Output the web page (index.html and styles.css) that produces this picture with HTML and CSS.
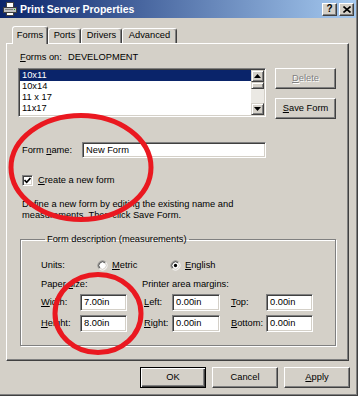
FILE: index.html
```html
<!DOCTYPE html>
<html>
<head>
<meta charset="utf-8">
<title>Print Server Properties</title>
<link rel="stylesheet" href="styles.css">
</head>
<body>
<div class="win">
  <div class="titlebar">
    <svg class="appicon" viewBox="0 0 16 16" width="16" height="16">
      <rect x="4.5" y="1.5" width="7" height="5" fill="#fff" stroke="#404040"/>
      <rect x="1.5" y="6.5" width="13" height="5" fill="#c0c0c0" stroke="#404040"/>
      <rect x="3" y="8" width="8" height="1" fill="#808080"/>
      <rect x="12" y="8" width="1" height="1" fill="#00c000"/>
      <rect x="4.5" y="11.5" width="7" height="3" fill="#fff" stroke="#404040"/>
    </svg>
    <span class="title">Print Server Properties</span>
    <span class="tbtn help">?</span>
    <span class="tbtn close"><svg viewBox="0 0 8 7" width="8" height="7"><path d="M0.5 0.5L7.5 6.5M7.5 0.5L0.5 6.5" stroke="#000" stroke-width="1.6"/></svg></span>
  </div>

  <div class="tabs">
    <div class="tab sel t-forms">Forms</div>
    <div class="tab t-ports">Ports</div>
    <div class="tab t-drivers">Drivers</div>
    <div class="tab t-adv">Advanced</div>
  </div>

  <div class="panel">
    <div class="formson"><span class="lbl-on"><u>F</u>orms on:</span><span>DEVELOPMENT</span></div>

    <div class="listrow">
      <div class="listbox">
        <div class="items">
          <div class="item sel">10x11</div>
          <div class="item">10x14</div>
          <div class="item">11 x 17</div>
          <div class="item">11x17</div>
        </div>
        <div class="vscroll">
          <div class="sbtn"><svg viewBox="0 0 7 4" width="7" height="4"><path d="M3.5 0L7 4H0z" fill="#000"/></svg></div>
          <div class="thumb"></div>
          <div class="track"></div>
          <div class="sbtn"><svg viewBox="0 0 7 4" width="7" height="4"><path d="M0 0H7L3.5 4z" fill="#000"/></svg></div>
        </div>
      </div>
      <div class="sidebtns">
        <div class="btn side disabled"><span><u>D</u>elete</span></div>
        <div class="btn side"><span><u>S</u>ave Form</span></div>
      </div>
    </div>

    <div class="namerow">
      <span class="lbl-name">Form <u>n</u>ame:</span>
      <div class="field wide">New Form</div>
    </div>

    <div class="checkrow">
      <span class="check"><svg viewBox="0 0 7 7" width="7" height="7"><path d="M0.5 3L2.7 5.3L6.5 1" stroke="#000" stroke-width="1.7" fill="none"/></svg></span>
      <span><u>C</u>reate a new form</span>
    </div>

    <p class="desc">Define a new form by editing the existing name and<br>measurements. Then click Save Form.</p>

    <fieldset class="group">
      <legend>Form description (measurements)</legend>
      <div class="units">
        <span class="lbl-units">Units:</span>
        <span class="opt metric">
          <svg class="radio" viewBox="0 0 12 12" width="11" height="11">
            <circle cx="6" cy="6" r="4" fill="#fff"/>
            <path d="M2.464 9.536A5 5 0 0 1 9.536 2.464" stroke="#808080" fill="none"/>
            <path d="M9.536 2.464A5 5 0 0 1 2.464 9.536" stroke="#fff" fill="none"/>
            <path d="M3.172 8.828A4 4 0 0 1 8.828 3.172" stroke="#404040" fill="none"/>
            <path d="M8.828 3.172A4 4 0 0 1 3.172 8.828" stroke="#d4d0c8" fill="none"/>
          </svg>
          <span><u>M</u>etric</span>
        </span>
        <span class="opt">
          <svg class="radio" viewBox="0 0 12 12" width="11" height="11">
            <circle cx="6" cy="6" r="4" fill="#fff"/>
            <path d="M2.464 9.536A5 5 0 0 1 9.536 2.464" stroke="#808080" fill="none"/>
            <path d="M9.536 2.464A5 5 0 0 1 2.464 9.536" stroke="#fff" fill="none"/>
            <path d="M3.172 8.828A4 4 0 0 1 8.828 3.172" stroke="#404040" fill="none"/>
            <path d="M8.828 3.172A4 4 0 0 1 3.172 8.828" stroke="#d4d0c8" fill="none"/>
            <circle cx="6" cy="6" r="1.8" fill="#000"/>
          </svg>
          <span><u>E</u>nglish</span>
        </span>
      </div>

      <div class="meas">
        <span class="c-paper">Paper <u>s</u>ize:</span>
        <span class="c-margins">Printer area margins:</span>

        <span class="c1"><u>W</u>idth:</span>
        <div class="field small c2">7.00in</div>
        <span class="c4"><u>L</u>eft:</span>
        <div class="field small c5">0.00in</div>
        <span class="c7"><u>T</u>op:</span>
        <div class="field small c8">0.00in</div>

        <span class="c1"><u>H</u>eight:</span>
        <div class="field small c2">8.00in</div>
        <span class="c4"><u>R</u>ight:</span>
        <div class="field small c5">0.00in</div>
        <span class="c7"><u>B</u>ottom:</span>
        <div class="field small c8">0.00in</div>
      </div>
    </fieldset>
  </div>

  <div class="buttons">
    <div class="btn dlg default"><span>OK</span></div>
    <div class="btn dlg"><span>Cancel</span></div>
    <div class="btn dlg"><span><u>A</u>pply</span></div>
  </div>

  <svg class="marks" viewBox="0 0 358 396" width="358" height="396">
    <ellipse cx="81" cy="167.5" rx="70" ry="52" fill="none" stroke="#ea1820" stroke-width="5"/>
    <ellipse cx="98" cy="313.5" rx="43" ry="39" fill="none" stroke="#ea1820" stroke-width="5"/>
  </svg>
</div>
</body>
</html>
```

FILE: styles.css
```css
* { box-sizing: border-box; }
html, body { margin: 0; padding: 0; }
body {
  width: 358px;
  height: 396px;
  overflow: hidden;
  background: #d4d0c8;
  font-family: "Liberation Sans", Arial, sans-serif;
  font-size: 9.3px;
  line-height: 11px;
  color: #000;
}
u { text-underline-offset: 1px; }

.win {
  position: relative;
  width: 358px;
  height: 396px;
  background: #d4d0c8;
  box-shadow: inset -1px -1px 0 #404040, inset -2px -2px 0 #808080;
  overflow: hidden;
}

/* title bar */
.titlebar {
  display: flex;
  align-items: center;
  width: 356px;
  height: 18px;
  padding: 0 2px 0 2px;
  background: linear-gradient(to right, #0a246a, #a6caf0);
}
.appicon { flex: none; }
.title {
  flex: 1;
  margin-left: 2px;
  color: #fff;
  font-weight: bold;
  font-size: 10.5px;
  white-space: nowrap;
}
.tbtn {
  flex: none;
  width: 15px;
  height: 13px;
  margin-left: 2px;
  display: flex;
  align-items: center;
  justify-content: center;
  background: #d4d0c8;
  border: 1px solid;
  border-color: #fff #404040 #404040 #fff;
  box-shadow: inset -1px -1px 0 #808080;
  font-weight: bold;
  font-size: 10px;
  line-height: 10px;
}

/* tabs */
.tabs {
  position: relative;
  z-index: 1;
  display: flex;
  align-items: flex-end;
  height: 17px;
  margin-top: 8px;
  padding-left: 12px;
}
.tab {
  height: 15px;
  padding-top: 1px;
  text-align: center;
  background: #d4d0c8;
  border: 1px solid;
  border-bottom: none;
  border-color: #fff #404040 transparent #fff;
  border-radius: 3px 3px 0 0;
  box-shadow: inset -1px 0 0 #808080;
  white-space: nowrap;
}
.tab.sel {
  height: 18px;
  margin-bottom: -1px;
  padding-top: 3px;
}
.t-forms { width: 36px; }
.t-ports { width: 33px; }
.t-drivers { width: 41px; }
.t-adv { width: 55px; }

/* panel */
.panel {
  margin-left: 6px;
  width: 343px;
  height: 318px;
  padding-top: 8px;
  border: 1px solid;
  border-color: #fff #404040 #404040 #fff;
  box-shadow: inset -1px -1px 0 #808080;
}
.formson {
  display: flex;
  height: 11px;
  margin-left: 13px;
}
.lbl-on { width: 48px; }

.listrow {
  display: flex;
  margin-top: 5px;
  margin-left: 11px;
}
.listbox {
  display: flex;
  width: 248px;
  height: 49px;
  padding: 1px;
  background: #fff;
  border: 1px solid;
  border-color: #808080 #fff #fff #808080;
  box-shadow: inset 1px 1px 0 #404040, inset -1px -1px 0 #d4d0c8;
}
.items { flex: 1; }
.item {
  height: 11px;
  line-height: 11px;
  padding-left: 2px;
  white-space: nowrap;
}
.item.sel { background: #0a246a; color: #fff; }
.vscroll {
  width: 13px;
  display: flex;
  flex-direction: column;
  background: #ebe9e4;
}
.sbtn, .thumb {
  background: #d4d0c8;
  border: 1px solid;
  border-color: #d4d0c8 #404040 #404040 #d4d0c8;
  box-shadow: inset 1px 1px 0 #fff, inset -1px -1px 0 #808080;
}
.sbtn {
  height: 12px;
  display: flex;
  align-items: center;
  justify-content: center;
}
.thumb { height: 7px; }
.track { flex: 1; }

.btn {
  display: flex;
  align-items: center;
  justify-content: center;
  background: #d4d0c8;
  border: 1px solid;
  border-color: #fff #404040 #404040 #fff;
  box-shadow: inset -1px -1px 0 #808080;
  white-space: nowrap;
}
.sidebtns {
  display: flex;
  flex-direction: column;
  gap: 9px;
  margin-left: 9px;
}
.btn.side { width: 61px; height: 21px; }
.btn.disabled { color: #808080; text-shadow: 1px 1px 0 #fff; }

.namerow {
  display: flex;
  align-items: center;
  margin-top: 23px;
  margin-left: 15px;
}
.lbl-name { width: 60px; }
.field {
  display: flex;
  align-items: center;
  padding-left: 3px;
  background: #fff;
  border: 1px solid;
  border-color: #808080 #fff #fff #808080;
  box-shadow: inset 1px 1px 0 #404040, inset -1px -1px 0 #d4d0c8;
  white-space: nowrap;
}
.field.wide { width: 184px; height: 16px; }
.field.small { height: 17px; }

.checkrow {
  display: flex;
  align-items: center;
  gap: 5px;
  height: 11px;
  margin-top: 17px;
  margin-left: 15px;
}
.check {
  width: 11px;
  height: 11px;
  display: flex;
  align-items: center;
  justify-content: center;
  background: #fff;
  border: 1px solid;
  border-color: #808080 #fff #fff #808080;
  box-shadow: inset 1px 1px 0 #404040, inset -1px -1px 0 #d4d0c8;
}

.desc {
  margin: 13px 0 0 15px;
  line-height: 11px;
}

.group {
  width: 316px;
  margin: 13px 0 0 13px;
  padding: 14px 0 13px 20px;
  border: 1px solid #808080;
  box-shadow: 1px 1px 0 #fff, inset 1px 1px 0 #fff;
  min-inline-size: 0;
}
.group legend {
  margin-left: 4px;
  padding: 0 2px;
  line-height: 11px;
}
.units {
  display: flex;
  align-items: center;
  height: 12px;
}
.lbl-units { width: 56px; }
.opt {
  display: flex;
  align-items: center;
  gap: 4px;
}
.opt.metric { width: 73px; }
.radio { flex: none; }

.meas {
  display: grid;
  grid-template-columns: 39px 47px 17px 28px 48px 11px 35px 47px;
  grid-template-rows: 12px 17px 17px;
  row-gap: 4px;
  margin-top: 7px;
  align-items: center;
  white-space: nowrap;
}
.c-paper { grid-column: 1 / 3; }
.c-margins { grid-column: 3 / 9; padding-left: 15px; }
.c1 { grid-column: 1; }
.c2 { grid-column: 2; }
.c4 { grid-column: 4; }
.c5 { grid-column: 5; }
.c7 { grid-column: 7; }
.c8 { grid-column: 8; }

.buttons {
  display: flex;
  justify-content: flex-end;
  gap: 6px;
  margin-top: 6px;
  padding-right: 8px;
}
.btn.dlg { width: 66px; height: 21px; }
.btn.default {
  border: 1px solid #000;
  box-shadow: inset 1px 1px 0 #fff, inset -1px -1px 0 #404040, inset -2px -2px 0 #808080;
}

.marks {
  position: absolute;
  left: 0;
  top: 0;
  pointer-events: none;
}
```
